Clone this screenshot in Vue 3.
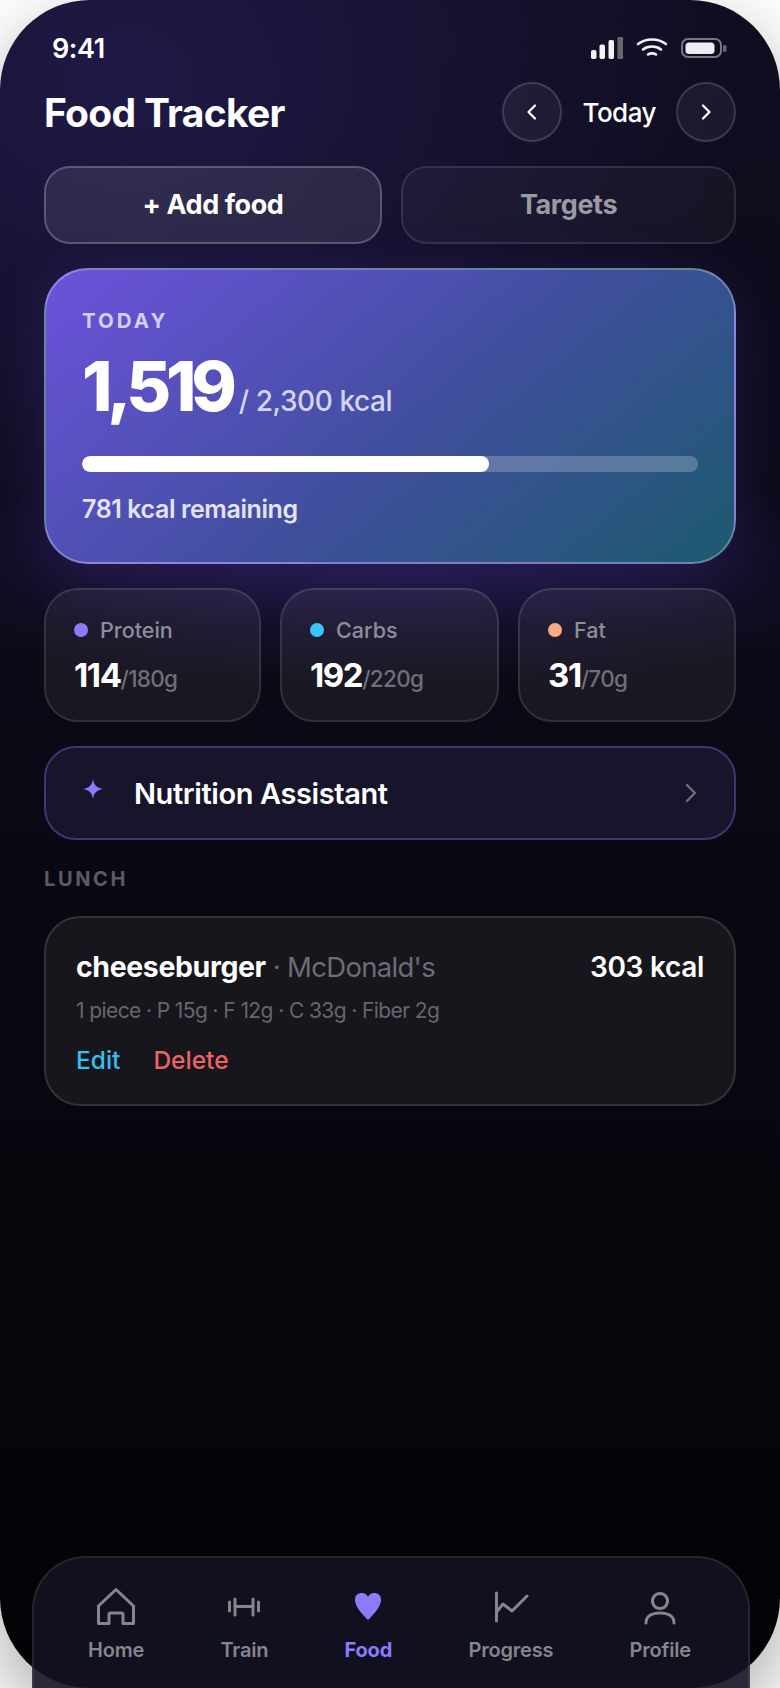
<template>
  <div class="phone">
    <div class="content">
      <div class="status">
        <span class="time">9:41</span>
        <div class="status-icons">
          <svg width="33" height="22" viewBox="0 0 33 22">
            <rect x="1" y="13" width="5.5" height="9" rx="1.8" fill="#f2f2f5" />
            <rect x="9.5" y="7.5" width="5.5" height="14.5" rx="1.8" fill="#f2f2f5" />
            <rect x="18.5" y="3" width="5.5" height="19" rx="1.8" fill="#f2f2f5" />
            <rect x="27.5" y="0" width="5.5" height="22" rx="1" fill="#66666e" />
          </svg>
          <svg width="32" height="22" viewBox="0 0 32 22" fill="none" stroke="#f2f2f5" stroke-width="2.6" stroke-linecap="round">
            <path d="M2 7C10 1 22 1 30 7" />
            <path d="M7 12.5C12 8.5 20 8.5 25 12.5" />
            <path d="M12 17.5C14 16 18 16 20 17.5" />
          </svg>
          <svg width="46" height="22" viewBox="0 0 46 22">
            <rect x="1" y="2" width="39" height="18" rx="6" fill="none" stroke="#77777f" stroke-width="2" />
            <rect x="4.5" y="5.5" width="29" height="11.5" rx="3.5" fill="#eeeef0" />
            <rect x="42" y="8" width="3.5" height="7" rx="1.5" fill="#66666e" />
          </svg>
        </div>
      </div>

      <div class="header">
        <h1>Food Tracker</h1>
        <div class="date-nav">
          <button class="round">
            <svg width="14" height="18" viewBox="0 0 14 18" fill="none" stroke="#fff" stroke-width="2.2" stroke-linecap="round" stroke-linejoin="round"><path d="M10 2.5L3.5 9l6.5 6.500" /></svg>
          </button>
          <span class="date">Today</span>
          <button class="round">
            <svg width="14" height="18" viewBox="0 0 14 18" fill="none" stroke="#fff" stroke-width="2.2" stroke-linecap="round" stroke-linejoin="round"><path d="M4 2.5L10.500 9 4 15.500" /></svg>
          </button>
        </div>
      </div>

      <div class="actions">
        <button class="act act-primary">+ Add food</button>
        <button class="act act-ghost">Targets</button>
      </div>

      <div class="hero">
        <div class="hero-label">TODAY</div>
        <div class="hero-num"><b>1,519</b><span>/ 2,300 kcal</span></div>
        <div class="track"><div class="fill" :style="{ width: pct + '%' }"></div></div>
        <div class="remain">781 kcal remaining</div>
      </div>

      <div class="macros">
        <div v-for="m in macros" :key="m.name" class="macro">
          <div class="macro-name"><i :style="{ background: m.color }"></i>{{ m.name }}</div>
          <div class="macro-val"><b>{{ m.val }}</b><span>/{{ m.goal }}g</span></div>
        </div>
      </div>

      <div class="assistant">
        <svg class="spark" width="22" height="22" viewBox="0 0 22 22"><path d="M11 1C11.8 7 14.5 9.8 21 11 14.5 12.2 11.8 15 11 21 10.2 15 7.500 12.200 1 11 7.500 9.800 10.200 7 11 1Z" fill="#8b7bff" /></svg>
        <span class="assistant-name">Nutrition Assistant</span>
        <svg width="14" height="20" viewBox="0 0 14 20" fill="none" stroke="#6f6f78" stroke-width="2.4" stroke-linecap="round" stroke-linejoin="round"><path d="M3 2l8 8-8 8" /></svg>
      </div>

      <div class="section">LUNCH</div>

      <div class="entry">
        <div class="entry-top">
          <div class="entry-name"><b>cheeseburger</b><span> · McDonald's</span></div>
          <div class="entry-kcal">303 kcal</div>
        </div>
        <div class="entry-meta">1 piece · P 15g · F 12g · C 33g · Fiber 2g</div>
        <div class="entry-links">
          <span class="edit">Edit</span>
          <span class="del">Delete</span>
        </div>
      </div>
    </div>

    <nav class="tabbar">
      <div v-for="t in tabs" :key="t.label" class="tab" :class="{ active: t.active }">
        <svg width="44" height="44" viewBox="0 0 44 44" fill="none" stroke="currentColor" stroke-width="3" stroke-linecap="round" stroke-linejoin="round">
          <path v-for="d in t.paths" :key="d" :d="d" :fill="t.active ? 'currentColor' : 'none'" :stroke="t.active ? 'none' : 'currentColor'" />
        </svg>
        <span>{{ t.label }}</span>
      </div>
    </nav>
  </div>
</template>

<script setup>
const pct = 66

const macros = [
  { name: 'Protein', val: 114, goal: 180, color: '#8b7bff' },
  { name: 'Carbs', val: 192, goal: 220, color: '#38c6ff' },
  { name: 'Fat', val: 31, goal: 70, color: '#f7a97f' }
]

const tabs = [
  { label: 'Home', paths: ['M22 4.500L39.500 21V38.500H29V29.500Q29 28 27.500 28H16.500Q15 28 15 29.500V38.500H4.500V21Z'] },
  { label: 'Train', paths: ['M13 21.500H31', 'M7.500 17V26', 'M13 14V30', 'M31 14V30', 'M36.500 17V26'] },
  { label: 'Food', active: true, paths: ['M22 35C15 28 9 21 9 15 9 10 12 8 15.500 8 18.500 8 21 9.500 22 12 23 9.500 25.500 8 28.500 8 32 8 35 10 35 15 35 21 29 28 22 35Z'] },
  { label: 'Progress', paths: ['M7.500 8V36', 'M7.500 27L14 19 23 26 38 11'] },
  { label: 'Profile', paths: ['M22 8.500a7.500 7.500 0 1 0 0.010 0Z', 'M8 38C8 31 14 28 22 28S36 31 36 38'] }
]
</script>

<style>
html, body { margin: 0; background: #fff; }
</style>

<style scoped>
.phone {
  position: relative;
  width: 780px;
  height: 1688px;
  overflow: hidden;
  background: #fff;
  font-family: Inter, "Noto Sans", sans-serif;
  color: #fff;
}
.content {
  box-sizing: border-box;
  height: 1688px;
  padding: 0 44px;
  border-radius: 90px;
  box-shadow: 0 30px 80px rgba(0, 0, 0, 0.35);
  background:
    radial-gradient(ellipse 620px 520px at 130px 80px, #1f1946 0%, rgba(34, 27, 77, 0) 100%),
    radial-gradient(ellipse 560px 110px at 390px 575px, rgba(90, 60, 190, 0.24) 0%, rgba(90, 60, 190, 0) 100%),
    linear-gradient(180deg, #0f0d20 0%, #08070f 65%, #030306 100%);
}
.status {
  display: flex;
  justify-content: space-between;
  align-items: center;
  height: 36px;
  padding: 30px 9px 0 8px;
}
.time { font-size: 27px; font-weight: 600; letter-spacing: -0.4px; }
.status-icons { display: flex; align-items: center; gap: 13px; }
.status-icons svg { display: block; }
.header {
  display: flex;
  justify-content: space-between;
  align-items: center;
  margin-top: 16px;
  height: 60px;
}
h1 { margin: 0; font-size: 39px; font-weight: 700; letter-spacing: -0.7px; }
.date-nav { display: flex; align-items: center; gap: 20px; }
.round {
  width: 60px;
  height: 60px;
  display: flex;
  align-items: center;
  justify-content: center;
  padding: 0;
  border-radius: 50%;
  border: 2px solid rgba(255, 255, 255, 0.14);
  background: rgba(255, 255, 255, 0.05);
}
.date { font-size: 26px; font-weight: 500; letter-spacing: -0.5px; }
.actions { display: grid; grid-template-columns: 338px 335px; gap: 19px; margin-top: 24px; }
.act {
  height: 78px;
  padding: 0 0 2px;
  border-radius: 26px;
  font-family: inherit;
  font-size: 27px;
  font-weight: 700;
  letter-spacing: -0.4px;
}
.act-primary {
  color: #fff;
  background: rgba(255, 255, 255, 0.09);
  border: 2px solid rgba(255, 255, 255, 0.22);
}
.act-ghost {
  color: #9a9aa3;
  background: rgba(255, 255, 255, 0.035);
  border: 2px solid rgba(255, 255, 255, 0.1);
}
.hero {
  box-sizing: border-box;
  height: 296px;
  margin-top: 24px;
  padding: 38px 36px 0;
  border-radius: 44px;
  border: 2px solid rgba(255, 255, 255, 0.28);
  background: linear-gradient(140deg, #6c52dc 0%, #3f4f9c 55%, #1c5a6e 100%);
  box-shadow: 0 14px 60px rgba(100, 70, 220, 0.22);
}
.hero-label { font-size: 20.5px; font-weight: 700; letter-spacing: 3px; color: #d4cff4; }
.hero-num { display: flex; align-items: baseline; gap: 7px; margin-top: 12px; }
.hero-num b { font-size: 69px; font-weight: 800; letter-spacing: -5.2px; line-height: 83px; }
.hero-num span { font-size: 28px; font-weight: 500; color: #d6d4f3; letter-spacing: -0.4px; }
.track {
  height: 16px;
  margin-top: 28px;
  border-radius: 8px;
  background: rgba(255, 255, 255, 0.22);
  overflow: hidden;
}
.fill { height: 100%; border-radius: 8px; background: #fff; }
.remain { margin-top: 22px; font-size: 25px; font-weight: 600; color: #e4e4f8; letter-spacing: -0.4px; }
.macros { display: grid; grid-template-columns: 217px 219px 218px; gap: 19px; margin-top: 24px; }
.macro {
  box-sizing: border-box;
  height: 134px;
  padding: 27px 0 0 28px;
  border-radius: 34px;
  border: 2px solid rgba(255, 255, 255, 0.11);
  background: rgba(255, 255, 255, 0.06);
}
.macro-name { display: flex; align-items: center; gap: 12px; font-size: 21.5px; font-weight: 500; color: #8e8e97; }
.macro-name i { width: 14px; height: 14px; border-radius: 50%; }
.macro-val { margin-top: 12px; }
.macro-val b { font-size: 33px; font-weight: 700; letter-spacing: -1.4px; }
.macro-val span { font-size: 22.5px; color: #6f6f78; font-weight: 500; letter-spacing: -0.7px; }
.assistant {
  box-sizing: border-box;
  display: flex;
  align-items: center;
  height: 94px;
  margin-top: 24px;
  padding: 0 36px 0 36px;
  border-radius: 32px;
  border: 2px solid #3d3670;
  background: #17152b;
}
.spark { margin-top: -8px; }
.assistant-name { flex: 1; margin-left: 30px; font-size: 29px; font-weight: 600; letter-spacing: -0.4px; }
.section { margin-top: 27px; font-size: 20px; font-weight: 700; letter-spacing: 2.6px; color: #5a5a65; }
.entry {
  box-sizing: border-box;
  height: 190px;
  margin-top: 25px;
  padding: 31px 30px 0;
  border-radius: 36px;
  border: 2px solid rgba(255, 255, 255, 0.12);
  background: #16161c;
}
.entry-top { display: flex; justify-content: space-between; align-items: center; }
.entry-name b { font-size: 28.5px; font-weight: 700; letter-spacing: -0.4px; }
.entry-name span { font-size: 27.5px; color: #6d6d75; letter-spacing: -0.7px; }
.entry-kcal { font-size: 28px; font-weight: 600; letter-spacing: -0.3px; }
.entry-meta { margin-top: 14px; font-size: 21px; color: #66666e; letter-spacing: -0.6px; }
.entry-links { display: flex; gap: 33px; margin-top: 22px; font-size: 24.5px; font-weight: 500; }
.edit { color: #38bdf0; }
.del { color: #ee6463; }
.tabbar {
  position: absolute;
  left: 32px;
  right: 30px;
  top: 1556px;
  bottom: 0;
  display: flex;
  justify-content: space-between;
  box-sizing: border-box;
  padding: 27px 57px 0 54px;
  border: 2px solid rgba(255, 255, 255, 0.09);
  border-bottom: 0;
  border-radius: 54px 54px 0 0;
  background: rgba(18, 18, 34, 0.88);
}
.tab { display: flex; flex-direction: column; align-items: center; color: #85858e; font-size: 20px; font-weight: 600; }
.tab span { margin-top: 9px; letter-spacing: -0.2px; }
.tab.active { color: #8b7bff; font-weight: 700; }
</style>
